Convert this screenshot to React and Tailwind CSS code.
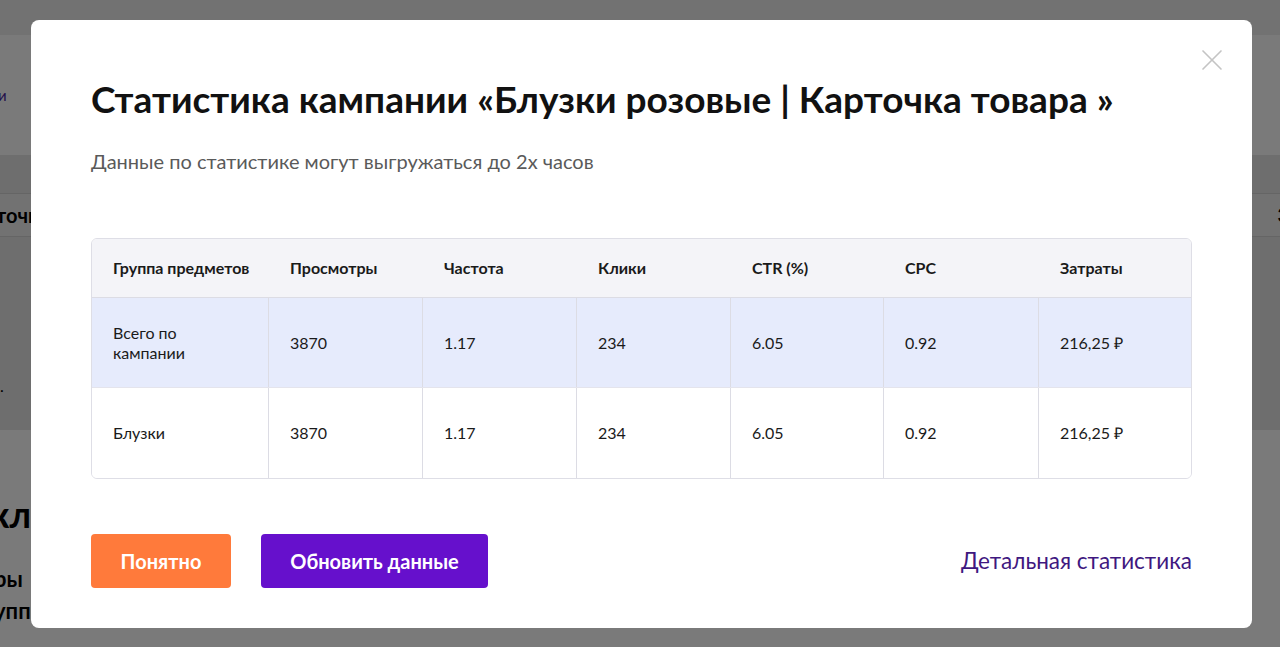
import React from "react";
import { X } from "lucide-react";

const columns = ["Группа предметов", "Просмотры", "Частота", "Клики", "CTR (%)", "CPC", "Затраты"];

const rows = [
  { name: "Всего по кампании", views: "3870", freq: "1.17", clicks: "234", ctr: "6.05", cpc: "0.92", cost: "216,25 ₽", total: true },
  { name: "Блузки", views: "3870", freq: "1.17", clicks: "234", ctr: "6.05", cpc: "0.92", cost: "216,25 ₽" },
];

const BackgroundPage = () => (
  <div className="flex flex-col w-full h-[647px] overflow-hidden bg-white text-black">
    <div className="h-[35px] bg-[#eeeeee]" />
    <div className="h-[120px] bg-white flex items-center px-0">
      <span className="text-[15px] text-[#4b1fa0] -ml-[2px]">и</span>
    </div>
    <div className="h-[275px] bg-[#e6e6e6] flex flex-col">
      <div className="h-[38px]" />
      <div className="h-[44px] bg-[#efefef] border-y border-[#d4d4d4] flex items-center justify-between">
        <span className="text-[20px] font-bold -ml-[4px]">точка</span>
        <span className="text-[18px] font-bold mr-[-8px]">3</span>
      </div>
      <div className="flex-1 flex items-end pb-[32px]">
        <span className="text-[16px]">.</span>
      </div>
    </div>
    <div className="flex-1 bg-white flex flex-col pt-[66px]">
      <span className="text-[36px] font-bold leading-none -ml-[10px]">кл</span>
      <span className="text-[22px] font-bold mt-[36px] -ml-[6px] leading-none">ры</span>
      <span className="text-[22px] font-bold mt-[10px] -ml-[6px] leading-none">упп</span>
    </div>
  </div>
);

const Cell = ({ children, last, header }) => (
  <div
    className={`flex items-center pl-[21px] pr-3 ${header ? "font-bold" : ""} ${last ? "" : "border-r"} ${
      header ? "border-transparent" : "border-[#dcdce4]"
    }`}
  >
    {children}
  </div>
);

const StatsTable = () => (
  <div className="border border-[#dedee6] rounded-[6px] overflow-hidden text-[16px] text-[#1a1a1a]">
    <div className="grid grid-cols-[177px_154px_154px_154px_153px_155px_1fr] h-[59px] bg-[#f4f4f8] border-b border-[#dcdce4]">
      {columns.map((c, i) => (
        <Cell key={c} header last={i === columns.length - 1}>
          {c}
        </Cell>
      ))}
    </div>
    {rows.map((r, idx) => (
      <div
        key={r.name}
        className={`grid grid-cols-[177px_154px_154px_154px_153px_155px_1fr] h-[90px] ${
          r.total ? "bg-[#e6ebfc]" : "bg-white"
        } ${idx === 0 ? "border-b border-[#e4e4ec]" : ""}`}
      >
        <Cell>
          <span className="leading-[20px] max-w-[120px]">{r.name}</span>
        </Cell>
        <Cell>{r.views}</Cell>
        <Cell>{r.freq}</Cell>
        <Cell>{r.clicks}</Cell>
        <Cell>{r.ctr}</Cell>
        <Cell>{r.cpc}</Cell>
        <Cell last>{r.cost}</Cell>
      </div>
    ))}
  </div>
);

export default function App() {
  return (
    <div className="relative w-full h-[647px] overflow-hidden" style={{ fontFamily: "Lato, 'Open Sans', sans-serif" }}>
      <BackgroundPage />
      {/* overlay */}
      <div className="absolute inset-0 bg-black/[0.52]" />

      {/* modal */}
      <div className="absolute left-[31px] top-[20px] w-[1221px] h-[608px] bg-white rounded-[8px] px-[60px] pt-[57px]">
        <button className="absolute right-[22px] top-[22px] text-[#c4c4c4]" aria-label="Закрыть">
          <X className="w-[36px] h-[36px]" strokeWidth={1.1} />
        </button>

        <h2 className="text-[37px] font-bold leading-[44px] text-[#111]">
          Статистика кампании «Блузки розовые | Карточка товара »
        </h2>
        <p className="mt-[27px] text-[20px] text-[#5a5a5a] leading-[26px]">
          Данные по статистике могут выгружаться до 2х часов
        </p>

        <div className="mt-[64px]">
          <StatsTable />
        </div>

        <div className="mt-[55px] flex items-center justify-between">
          <div className="flex items-center gap-[30px]">
            <button className="h-[54px] w-[140px] rounded-[4px] bg-[#ff7a3b] text-white text-[20px] font-bold">
              Понятно
            </button>
            <button className="h-[54px] w-[227px] rounded-[4px] bg-[#6610cc] text-white text-[20px] font-bold">
              Обновить данные
            </button>
          </div>
          <a className="text-[22.5px] text-[#3f1880] cursor-pointer">Детальная статистика</a>
        </div>
      </div>
    </div>
  );
}
